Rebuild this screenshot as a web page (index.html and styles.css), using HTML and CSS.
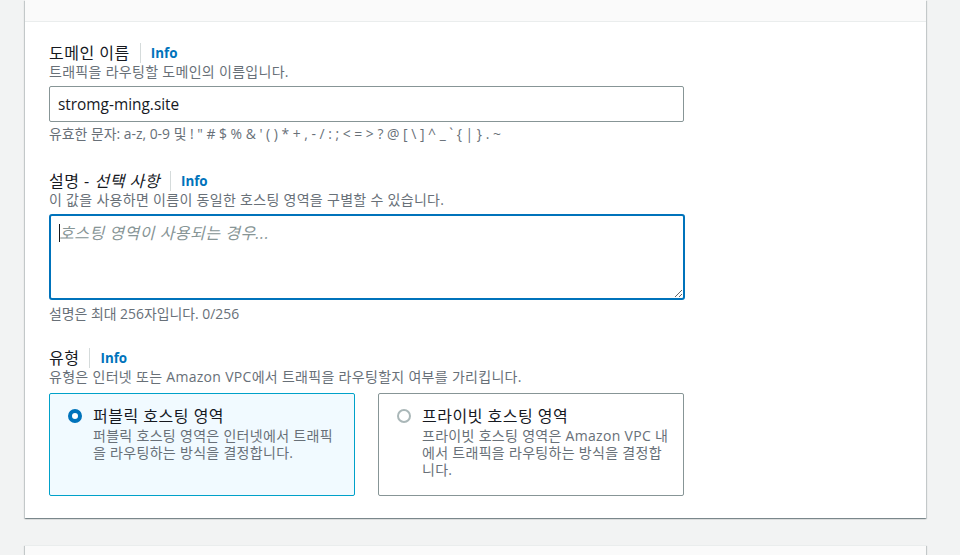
FILE: index.html
```html
<!DOCTYPE html>
<html lang="ko">
<head>
<meta charset="utf-8">
<title>호스팅 영역 생성</title>
<link rel="stylesheet" href="styles.css">
</head>
<body>
<div class="page">
  <section class="card">
    <div class="card-header"></div>
    <div class="card-body">
      <div class="field">
        <div class="label-row"><span class="label">도메인 이름</span><span class="sep"></span><a class="info">Info</a></div>
        <div class="desc">트래픽을 라우팅할 도메인의 이름입니다.</div>
        <input class="input" type="text" value="stromg-ming.site">
        <div class="constraint">유효한 문자: a-z, 0-9 및 ! " # $ % &amp; ' ( ) * + , - / : ; &lt; = &gt; ? @ [ \ ] ^ _ ` { | } . ~</div>
      </div>

      <div class="field field-desc">
        <div class="label-row"><span class="label">설명 - <em>선택 사항</em></span><span class="sep"></span><a class="info">Info</a></div>
        <div class="desc">이 값을 사용하면 이름이 동일한 호스팅 영역을 구별할 수 있습니다.</div>
        <div class="textarea-wrap">
          <textarea class="textarea" placeholder="호스팅 영역이 사용되는 경우..."></textarea>
          <span class="caret"></span>
        </div>
        <div class="constraint">설명은 최대 256자입니다. 0/256</div>
      </div>

      <div class="field field-type">
        <div class="label-row"><span class="label">유형</span><span class="sep"></span><a class="info">Info</a></div>
        <div class="desc">유형은 인터넷 또는 Amazon VPC에서 트래픽을 라우팅할지 여부를 가리킵니다.</div>
        <div class="tiles">
          <div class="tile selected">
            <span class="radio checked"></span>
            <div class="tile-text">
              <div class="tile-title">퍼블릭 호스팅 영역</div>
              <div class="tile-desc">퍼블릭 호스팅 영역은 인터넷에서 트래픽을 라우팅하는 방식을 결정합니다.</div>
            </div>
          </div>
          <div class="tile">
            <span class="radio"></span>
            <div class="tile-text">
              <div class="tile-title">프라이빗 호스팅 영역</div>
              <div class="tile-desc">프라이빗 호스팅 영역은 Amazon VPC 내에서 트래픽을 라우팅하는 방식을 결정합니다.</div>
            </div>
          </div>
        </div>
      </div>
    </div>
  </section>
  <section class="card card-next"></section>
</div>
</body>
</html>
```

FILE: styles.css
```css
* { box-sizing: border-box; }
html, body {
  margin: 0;
  padding: 0;
  background: #f2f3f3;
  height: 555px;
  overflow: hidden;
}
body {
  font-family: "Open Sans", "Noto Sans CJK KR", sans-serif;
  color: #16191f;
}
.page {
  padding-left: 25px;
  width: 926px;
}
.card {
  background: #fff;
  box-shadow: 0 1px 1px 0 rgba(0, 28, 36, 0.3), 1px 1px 1px 0 rgba(0, 28, 36, 0.15), -1px 1px 1px 0 rgba(0, 28, 36, 0.15);
}
.card-header {
  height: 22px;
  background: #fafafa;
  border-bottom: 1px solid #eaeded;
}
.card-body {
  padding: 20px 24px 22px;
}
.label-row {
  display: flex;
  align-items: center;
  height: 22px;
}
.label {
  font-size: 16px;
  letter-spacing: 0.5px;
  line-height: 22px;
  color: #16191f;
}
.label em { font-style: italic; }
.sep {
  width: 1px;
  height: 20px;
  background: #d5dbdb;
  margin: 0 10px 0 10px;
}
.info {
  font-size: 13.4px;
  font-weight: 700;
  color: #0073bb;
  line-height: 22px;
}
.desc {
  margin-top: -1px;
  font-size: 14px;
  letter-spacing: 0.3px;
  line-height: 18px;
  color: #687078;
}
.input {
  display: block;
  margin-top: 5px;
  width: 635px;
  height: 36px;
  border: 1px solid #879596;
  border-radius: 2px;
  padding: 0 8px;
  font-family: inherit;
  font-size: 15.4px;
  color: #16191f;
  outline: none;
}
.constraint {
  margin-top: 4px;
  font-size: 13.9px;
  line-height: 16px;
  color: #687078;
}
.field-desc { margin-top: 28px; }
.textarea-wrap {
  position: relative;
  margin-top: 5px;
  width: 636px;
  height: 86px;
}
.textarea {
  display: block;
  width: 636px;
  height: 86px;
  border: 2px solid #0073bb;
  border-radius: 3px;
  padding: 6px 8px;
  font-family: inherit;
  font-size: 16px;
  letter-spacing: 0.5px;
  line-height: 22px;
  resize: both;
  outline: none;
}
.textarea::placeholder {
  font-style: italic;
  color: #879596;
}
.caret {
  position: absolute;
  left: 10px;
  top: 10px;
  width: 1px;
  height: 18px;
  background: #16191f;
}
.field-desc .constraint { margin-top: 6px; }
.field-type { margin-top: 25px; }
.tiles {
  margin-top: 7px;
  display: grid;
  grid-template-columns: 306px 306px;
  column-gap: 23px;
}
.tile {
  height: 103px;
  border: 1px solid #879596;
  border-radius: 2px;
  background: #fff;
  padding: 11px 12px 0 18px;
  display: flex;
  align-items: flex-start;
}
.tile.selected {
  background: #f1faff;
  border-color: #00a1c9;
}
.radio {
  flex: none;
  width: 14px;
  height: 14px;
  border-radius: 50%;
  border: 2px solid #aab7b8;
  background: #fff;
  margin-top: 4px;
  margin-right: 11px;
}
.radio.checked {
  border: 4px solid #0073bb;
}
.tile-title {
  font-size: 16px;
  letter-spacing: 0.5px;
  line-height: 22px;
  color: #16191f;
}
.tile-desc {
  margin-top: 0;
  font-size: 14px;
  letter-spacing: 0.3px;
  line-height: 17px;
  color: #687078;
}
.card-next {
  margin-top: 27px;
  height: 40px;
  background: #fafafa;
  border-top: 1px solid #eaeded;
}
```
